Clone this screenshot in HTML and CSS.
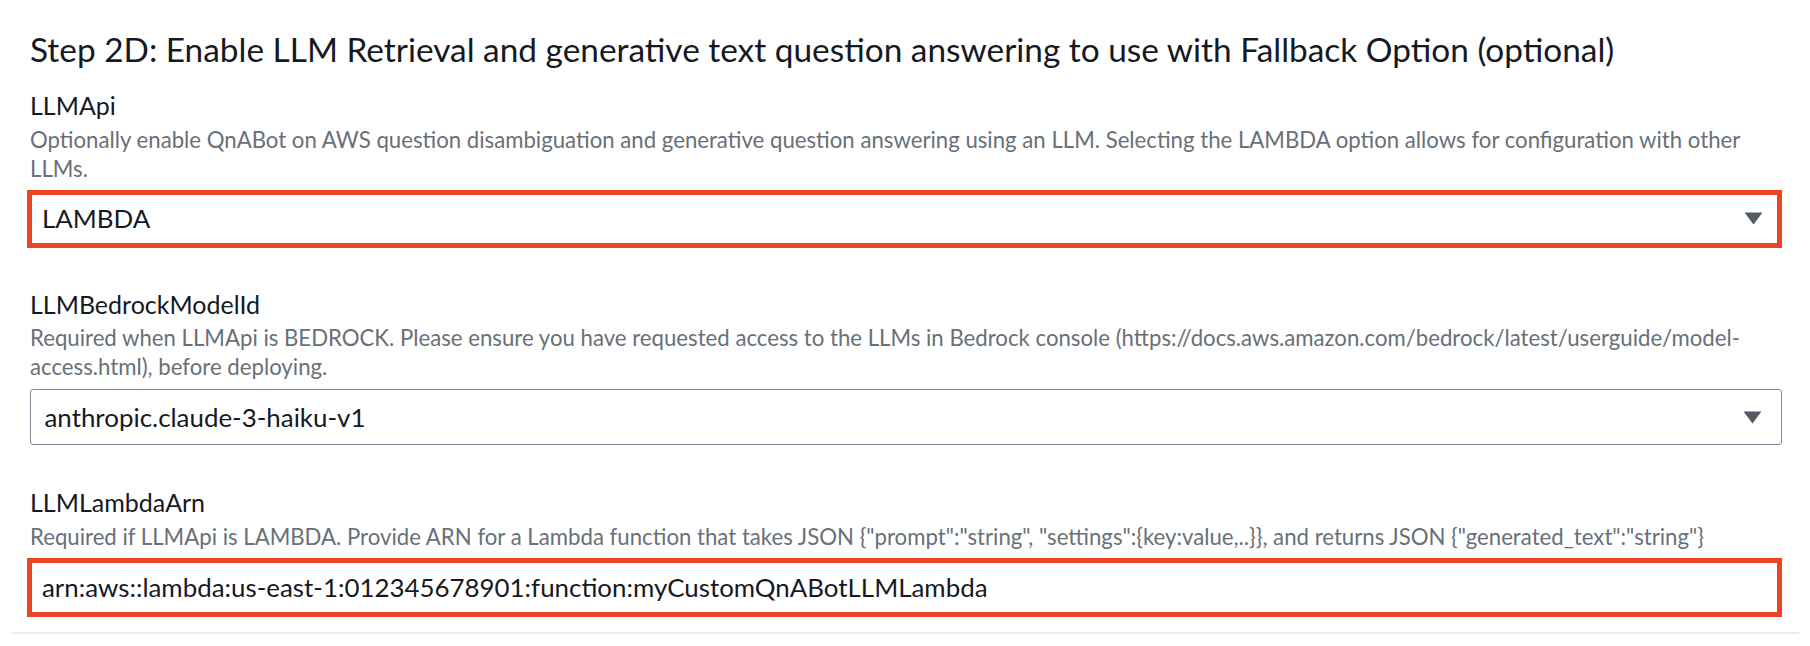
FILE: index.html
```html
<!DOCTYPE html>
<html lang="en">
<head>
<meta charset="utf-8">
<title>Step 2D</title>
<link rel="stylesheet" href="styles.css">
</head>
<body>
<section class="section">
  <h2 class="title">Step 2D: Enable LLM Retrieval and generative text question answering to use with Fallback Option (optional)</h2>

  <div class="field">
    <div class="label">LLMApi</div>
    <div class="desc">Optionally enable QnABot on AWS question disambiguation and generative question answering using an LLM. Selecting the LAMBDA option allows for configuration with other LLMs.</div>
    <div class="select hl">
      <span class="value">LAMBDA</span>
      <svg class="caret" width="19" height="13" viewBox="0 0 19 13"><path d="M0.5 0.5 H18.5 L9.5 12.5 Z" fill="#545b64"/></svg>
    </div>
  </div>

  <div class="field">
    <div class="label">LLMBedrockModelId</div>
    <div class="desc">Required when LLMApi is BEDROCK. Please ensure you have requested access to the LLMs in Bedrock console (https://docs.aws.amazon.com/bedrock/latest/userguide/model-access.html), before deploying.</div>
    <div class="select">
      <span class="value">anthropic.claude-3-haiku-v1</span>
      <svg class="caret" width="19" height="13" viewBox="0 0 19 13"><path d="M0.5 0.5 H18.5 L9.5 12.5 Z" fill="#545b64"/></svg>
    </div>
  </div>

  <div class="field">
    <div class="label">LLMLambdaArn</div>
    <div class="desc">Required if LLMApi is LAMBDA. Provide ARN for a Lambda function that takes JSON {"prompt":"string", "settings":{key:value,..}}, and returns JSON {"generated_text":"string"}</div>
    <div class="select input hl">
      <span class="value">arn:aws::lambda:us-east-1:012345678901:function:myCustomQnABotLLMLambda</span>
    </div>
  </div>
</section>
</body>
</html>
```
FILE: styles.css
```css
html, body {
  margin: 0;
  padding: 0;
  background: #ffffff;
}

body {
  font-family: "Lato", "Open Sans", sans-serif;
  color: #16191f;
}

.section {
  margin: 0 11px 0 12px;
  padding: 29px 17px 16px 18px;
  border-bottom: 2px solid #eaeded;
}

.title {
  margin: 0 0 21.3px 0;
  font-size: 33.4px;
  line-height: 40px;
  font-weight: 400;
  color: #16191f;
  white-space: nowrap;
}

.field {
  display: flex;
  flex-direction: column;
}

.field + .field {
  margin-top: 42px;
}

.label {
  font-size: 25px;
  line-height: 30px;
  color: #16191f;
}

.desc {
  margin-top: 4.6px;
  font-size: 22.2px;
  line-height: 29px;
  color: #687078;
}

.select {
  margin-top: 8px;
  height: 56px;
  box-sizing: border-box;
  border: 1px solid #7d8998;
  border-radius: 3px;
  padding: 0 19px 0 13.5px;
  display: flex;
  align-items: center;
  justify-content: space-between;
  background: #ffffff;
}

.value {
  font-size: 25.9px;
  line-height: 31px;
  color: #16191f;
  white-space: nowrap;
}

.caret {
  flex: none;
  display: block;
}

.select.hl {
  margin-top: 7px;
  margin-bottom: -1px;
  margin-left: -3px;
  height: 58px;
  border: 5.5px solid #ea4327;
  border-radius: 0;
  padding: 0 14.5px 0 10px;
}

.select.input.hl {
  height: 59px;
}
```
